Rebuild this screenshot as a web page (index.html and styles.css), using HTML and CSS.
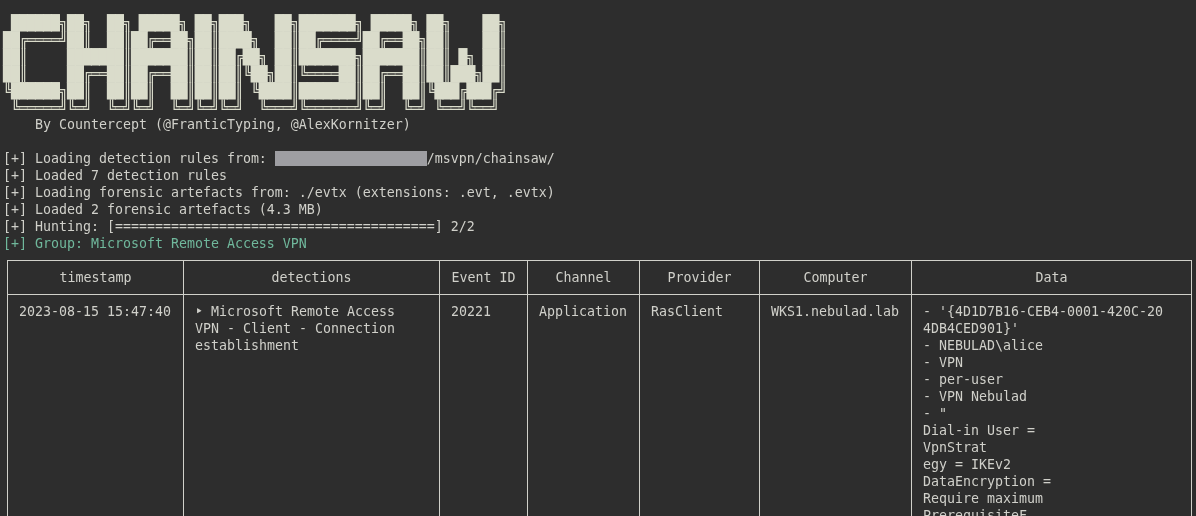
FILE: index.html
```
<!DOCTYPE html>
<html lang="en">
<head>
<meta charset="utf-8">
<title>Chainsaw</title>
<link rel="stylesheet" href="styles.css">
</head>
<body>
<main class="terminal">
<pre class="banner"> ██████╗██╗  ██╗ █████╗ ██╗███╗   ██╗███████╗ █████╗ ██╗    ██╗
██╔════╝██║  ██║██╔══██╗██║████╗  ██║██╔════╝██╔══██╗██║    ██║
██║     ███████║███████║██║██╔██╗ ██║███████╗███████║██║ █╗ ██║
██║     ██╔══██║██╔══██║██║██║╚██╗██║╚════██║██╔══██║██║███╗██║
╚██████╗██║  ██║██║  ██║██║██║ ╚████║███████║██║  ██║╚███╔███╔╝
 ╚═════╝╚═╝  ╚═╝╚═╝  ╚═╝╚═╝╚═╝  ╚═══╝╚══════╝╚═╝  ╚═╝ ╚══╝╚══╝ </pre>
<pre class="log">    By Countercept (@FranticTyping, @AlexKornitzer)

[+] Loading detection rules from: <span class="redacted">                   </span>/msvpn/chainsaw/
[+] Loaded 7 detection rules
[+] Loading forensic artefacts from: ./evtx (extensions: .evt, .evtx)
[+] Loaded 2 forensic artefacts (4.3 MB)
[+] Hunting: [========================================] 2/2
<span class="group">[+] Group: Microsoft Remote Access VPN</span></pre>
<table class="results">
<colgroup>
<col class="c-time"><col class="c-det"><col class="c-id"><col class="c-chan"><col class="c-prov"><col class="c-comp"><col class="c-data">
</colgroup>
<thead>
<tr><th>timestamp</th><th>detections</th><th>Event ID</th><th>Channel</th><th>Provider</th><th>Computer</th><th>Data</th></tr>
</thead>
<tbody>
<tr>
<td>2023-08-15 15:47:40</td>
<td>‣ Microsoft Remote Access
VPN - Client - Connection
establishment</td>
<td>20221</td>
<td>Application</td>
<td>RasClient</td>
<td>WKS1.nebulad.lab</td>
<td>- '{4D1D7B16-CEB4-0001-420C-20
4DB4CED901}'
- NEBULAD\alice
- VPN
- per-user
- VPN Nebulad
- "
Dial-in User =
VpnStrat
egy = IKEv2
DataEncryption =
Require maximum
PrerequisiteF
ile =</td>
</tr>
</tbody>
</table>
</main>
</body>
</html>
```
FILE: styles.css
```
html, body {
  margin: 0;
  height: 516px;
  overflow: hidden;
  background: #2d2d2d;
}
.terminal {
  padding: 14px 3px 0;
  color: #d0d0ca;
  font-family: "DejaVu Sans Mono", monospace;
  font-size: 13.29px;
  line-height: 17px;
  will-change: transform;
}
pre {
  margin: 0;
  font: inherit;
}
.banner {
  height: 102px;
  color: #dadccb;
  font-size: 14.7px;
  letter-spacing: -0.85px;
  line-height: 17px;
}
.redacted {
  background: #9e9ea2;
}
.group {
  color: #70b89c;
}
.results {
  margin: 8px 0 0 4px;
  width: 1185px;
  table-layout: fixed;
  border-collapse: separate;
  border-spacing: 0;
  border-top: 1px solid #d0d0ca;
  border-left: 1px solid #d0d0ca;
}
.results th, .results td {
  padding: 8px 11px;
  border-right: 1px solid #d0d0ca;
  border-bottom: 1px solid #d0d0ca;
  font-weight: 400;
  white-space: pre;
  vertical-align: top;
}
.results th {
  text-align: center;
}
.results td {
  text-align: left;
}
.c-time { width: 176px; }
.c-det { width: 256px; }
.c-id { width: 88px; }
.c-chan { width: 112px; }
.c-prov { width: 120px; }
.c-comp { width: 152px; }
.c-data { width: 280px; }
```
